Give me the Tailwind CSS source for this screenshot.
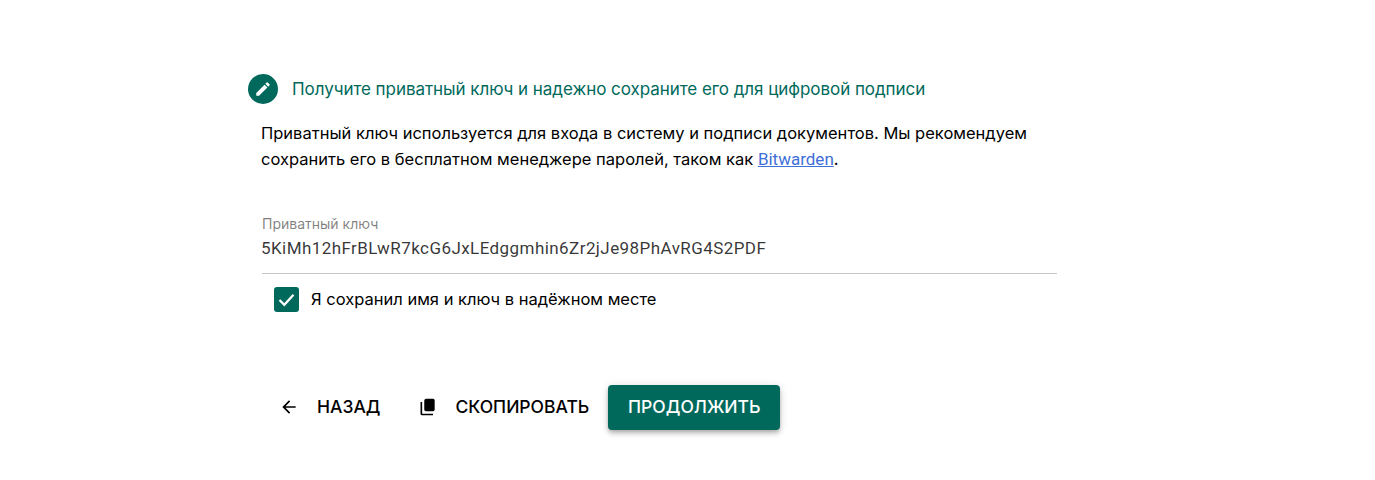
<!DOCTYPE html>
<html lang="en">
<head>
  <meta charset="UTF-8" />
  <title>Приватный ключ</title>
  <script src="https://cdn.jsdelivr.net/npm/@tailwindcss/browser@4"></script>
</head>
<body class="bg-white font-['Inter',sans-serif] text-black">
  <div class="w-[1375px] h-[480px] overflow-hidden pl-[248px] pt-[74px]">
    <!-- Step header -->
    <div class="flex items-center gap-[14px] h-[30px]">
      <div class="w-[30px] h-[30px] rounded-full bg-[#00695c] flex items-center justify-center">
        <svg class="w-[18px] h-[18px]" viewBox="0 0 24 24" fill="#fff"><path d="M3 17.25V21h3.75L17.81 9.94l-3.75-3.75L3 17.25zM20.71 7.04a1 1 0 0 0 0-1.41l-2.34-2.34a1 1 0 0 0-1.41 0l-1.83 1.83 3.75 3.75 1.83-1.83z"/></svg>
      </div>
      <span class="text-[#00695c] text-[17px] leading-[24px] tracking-[-0.05px]">Получите приватный ключ и надежно сохраните его для цифровой подписи</span>
    </div>

    <div class="pl-[13px] w-[809px]">
      <p class="mt-[16px] text-[16.5px] leading-[26px] whitespace-nowrap">Приватный ключ используется для входа в систему и подписи документов. Мы рекомендуем<br>сохранить его в бесплатном менеджере паролей, таком как <a href="#" class="font-['Roboto',sans-serif] text-[17px] text-[#3f6fd8] underline">Bitwarden</a>.</p>

      <!-- Key field -->
      <div class="mt-[44px] ml-[1px] border-b border-[#c4c4c4] h-[58px]">
        <div class="text-[14px] leading-[16px] text-black/50">Приватный ключ</div>
        <div class="mt-[4px] font-['Roboto',sans-serif] text-[17px] leading-[24px] text-black/80 tracking-[0.43px] -ml-[1px]">5KiMh12hFrBLwR7kcG6JxLEdggmhin6Zr2jJe98PhAvRG4S2PDF</div>
      </div>

      <!-- Checkbox -->
      <label class="flex items-center gap-[12px] ml-[13px] mt-[12px] h-[26px]">
        <span class="w-[25px] h-[25px] rounded-[3px] bg-[#00695c] flex items-center justify-center">
          <svg class="w-[21px] h-[21px]" viewBox="0 0 24 24" fill="none" stroke="#fff" stroke-width="2.6"><path d="M4 12.5l5.5 5.5L20 6.5"/></svg>
        </span>
        <span class="text-[16.5px] leading-[24px]">Я сохранил имя и ключ в надёжном месте</span>
      </label>
    </div>

    <!-- Actions -->
    <div class="flex items-center mt-[72px] ml-[14px] h-[46px]">
      <button class="flex items-center h-[42px] px-[17px] text-[17.5px] font-medium">
        <svg class="w-[20px] h-[20px] mr-[18px]" viewBox="0 0 24 24" fill="#000"><path d="M20 11H7.83l5.59-5.59L12 4l-8 8 8 8 1.41-1.41L7.83 13H20v-2z"/></svg>
        НАЗАД
      </button>
      <button class="flex items-center h-[42px] ml-[2px] px-[19px] text-[17.5px] font-medium">
        <svg class="w-[20px] h-[20px] mr-[17px]" viewBox="0 0 24 24" fill="#000"><path d="M4 7H2v14a2 2 0 0 0 2 2h13v-2H4V7z" transform="translate(1 -1)"/><path d="M18 2h-8a2.5 2.5 0 0 0-2.5 2.5V15a2 2 0 0 0 2 2H18a2 2 0 0 0 2-2V4a2 2 0 0 0-2-2z"/></svg>
        СКОПИРОВАТЬ
      </button>
      <button class="h-[45px] w-[172px] rounded-[4px] bg-[#00695c] text-white text-[17.5px] font-medium shadow-[0_2px_4px_-1px_rgba(0,0,0,0.2),0_4px_5px_0_rgba(0,0,0,0.14),0_1px_10px_0_rgba(0,0,0,0.12)]">ПРОДОЛЖИТЬ</button>
    </div>
  </div>
</body>
</html>
